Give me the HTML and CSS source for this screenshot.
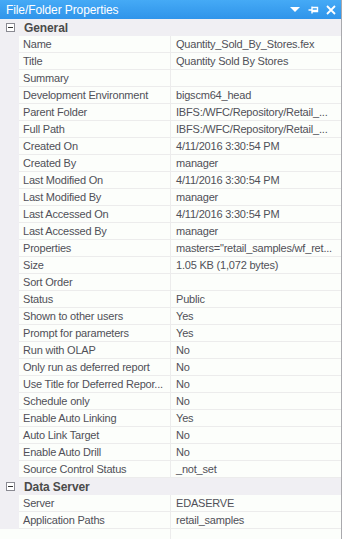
FILE: index.html
```html
<!DOCTYPE html>
<html>
<head>
<meta charset="utf-8">
<link rel="stylesheet" href="styles.css">
</head>
<body>
<div class="panel">
  <div class="titlebar">
    <span class="title">File/Folder Properties</span>
    <div class="tools">
      <svg width="11" height="6" viewBox="0 0 11 6"><path d="M0 0H10L5 5Z" fill="#fff"/></svg>
      <svg width="11" height="10" viewBox="0 0 11 10"><path d="M0.5 5H4M4 1.5V8.5M4 2.5H9.5V6.5H4M4 5.5H9.5" stroke="#fff" stroke-width="1.4" fill="none"/></svg>
      <svg width="10" height="10" viewBox="0 0 10 10"><path d="M1 1L9 9M9 1L1 9" stroke="#fff" stroke-width="1.8"/></svg>
    </div>
  </div>
  <div class="grid">
    <div class="cat"><span class="toggle"></span><span class="catname">General</span></div>
    <div class="row"><div class="k">Name</div><div class="v">Quantity_Sold_By_Stores.fex</div></div>
    <div class="row"><div class="k">Title</div><div class="v">Quantity Sold By Stores</div></div>
    <div class="row"><div class="k">Summary</div><div class="v"></div></div>
    <div class="row"><div class="k">Development Environment</div><div class="v">bigscm64_head</div></div>
    <div class="row"><div class="k">Parent Folder</div><div class="v">IBFS:/WFC/Repository/Retail_...</div></div>
    <div class="row"><div class="k">Full Path</div><div class="v">IBFS:/WFC/Repository/Retail_...</div></div>
    <div class="row"><div class="k">Created On</div><div class="v">4/11/2016 3:30:54 PM</div></div>
    <div class="row"><div class="k">Created By</div><div class="v">manager</div></div>
    <div class="row"><div class="k">Last Modified On</div><div class="v">4/11/2016 3:30:54 PM</div></div>
    <div class="row"><div class="k">Last Modified By</div><div class="v">manager</div></div>
    <div class="row"><div class="k">Last Accessed On</div><div class="v">4/11/2016 3:30:54 PM</div></div>
    <div class="row"><div class="k">Last Accessed By</div><div class="v">manager</div></div>
    <div class="row"><div class="k">Properties</div><div class="v">masters="retail_samples/wf_ret...</div></div>
    <div class="row"><div class="k">Size</div><div class="v">1.05 KB (1,072 bytes)</div></div>
    <div class="row"><div class="k">Sort Order</div><div class="v"></div></div>
    <div class="row"><div class="k">Status</div><div class="v">Public</div></div>
    <div class="row"><div class="k">Shown to other users</div><div class="v">Yes</div></div>
    <div class="row"><div class="k">Prompt for parameters</div><div class="v">Yes</div></div>
    <div class="row"><div class="k">Run with OLAP</div><div class="v">No</div></div>
    <div class="row"><div class="k">Only run as deferred report</div><div class="v">No</div></div>
    <div class="row"><div class="k">Use Title for Deferred Repor...</div><div class="v">No</div></div>
    <div class="row"><div class="k">Schedule only</div><div class="v">No</div></div>
    <div class="row"><div class="k">Enable Auto Linking</div><div class="v">Yes</div></div>
    <div class="row"><div class="k">Auto Link Target</div><div class="v">No</div></div>
    <div class="row"><div class="k">Enable Auto Drill</div><div class="v">No</div></div>
    <div class="row"><div class="k">Source Control Status</div><div class="v">_not_set</div></div>
    <div class="cat"><span class="toggle"></span><span class="catname">Data Server</span></div>
    <div class="row"><div class="k">Server</div><div class="v">EDASERVE</div></div>
    <div class="row"><div class="k">Application Paths</div><div class="v">retail_samples</div></div>
    <div class="row empty"><div class="k"></div><div class="v"></div></div>
  </div>
</div>
</body>
</html>
```
FILE: styles.css
```css
html, body {
  margin: 0;
  padding: 0;
  background: #fff;
}
.panel {
  width: 341px;
  height: 539px;
  border-right: 1px solid #a9a9ad;
  overflow: hidden;
  font-family: "Liberation Sans", Arial, sans-serif;
  font-size: 11px;
  letter-spacing: -0.2px;
}
.titlebar {
  height: 19px;
  display: flex;
  align-items: center;
  justify-content: space-between;
  padding-left: 6px;
  padding-right: 5px;
  background: linear-gradient(#45aaf6, #2f94ea);
  color: #fff;
}
.title {
  font-size: 12px;
  letter-spacing: -0.1px;
}
.tools {
  display: flex;
  align-items: center;
  gap: 7px;
}
.grid {
  display: flex;
  flex-direction: column;
}
.cat {
  height: 17px;
  display: flex;
  align-items: center;
  background: #f0eff3;
}
.toggle {
  width: 7px;
  height: 7px;
  margin-left: 6px;
  border: 1px solid #8a8a92;
  background: #fff;
  position: relative;
}
.toggle::after {
  content: "";
  position: absolute;
  left: 1px;
  top: 3px;
  width: 5px;
  height: 1px;
  background: #333;
}
.catname {
  margin-left: 9px;
  font-weight: bold;
  font-size: 12px;
  letter-spacing: -0.1px;
  color: #4a4a4a;
}
.row {
  height: 17px;
  display: flex;
  background: #f0eff3;
  padding-left: 19px;
}
.k, .v {
  height: 16px;
  border-bottom: 1px solid #ececec;
  background: #fcfefb;
  color: #505058;
  white-space: nowrap;
  overflow: hidden;
  line-height: 16px;
}
.k {
  width: 147px;
  padding-left: 4px;
  border-right: 1px solid #ececec;
}
.v {
  flex: 1;
  padding-left: 5px;
}
.row.empty {
  background: #fcfefb;
}
```
